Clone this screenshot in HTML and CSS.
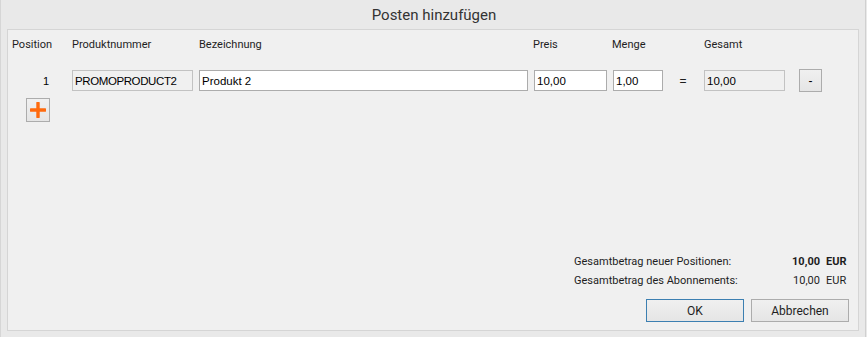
FILE: index.html
```html
<!DOCTYPE html>
<html lang="de">
  <head>
    <meta charset="UTF-8" />
    <title>Posten hinzufügen</title>
    <link rel="stylesheet" href="styles.css">
  </head>
  <body>
    <div class="window">
      <div class="title">Posten hinzufügen</div>
      <div class="panel">
        <!-- Kopfzeile -->
        <div class="grid head">
          <div class="c-pos">Position</div>
          <div>Produktnummer</div>
          <div>Bezeichnung</div>
          <div class="c-preis">Preis</div>
          <div class="c-menge">Menge</div>
          <div></div>
          <div>Gesamt</div>
          <div></div>
        </div>

        <!-- Positionen -->
        <div class="grid row">
          <div class="c-pos num">1</div>
          <div><input class="field ro w-nr" type="text" value="PROMOPRODUCT2" readonly></div>
          <div><input class="field w-bez" type="text" value="Produkt 2"></div>
          <div><input class="field w-preis" type="text" value="10,00"></div>
          <div><input class="field w-menge" type="text" value="1,00"></div>
          <div class="eq">=</div>
          <div><input class="field ro w-ges" type="text" value="10,00" readonly></div>
          <div><button class="btn-remove" type="button">-</button></div>
        </div>

        <button class="btn-add" type="button" title="Position hinzufügen">
          <svg width="16" height="16" viewBox="0 0 16 16">
            <path d="M8 1v14M1 8h14" stroke="#ff6a0d" stroke-width="3.4" stroke-linecap="round" />
          </svg>
        </button>

        <div class="spacer"></div>

        <!-- Summen -->
        <div class="totals">
          <div class="total-row">
            <span class="t-label">Gesamtbetrag neuer Positionen:</span>
            <span class="t-amount strong">10,00</span>
            <span class="t-unit strong">EUR</span>
          </div>
          <div class="total-row">
            <span class="t-label">Gesamtbetrag des Abonnements:</span>
            <span class="t-amount">10,00</span>
            <span class="t-unit">EUR</span>
          </div>
        </div>

        <div class="actions">
          <button class="btn default" type="button">OK</button>
          <button class="btn" type="button">Abbrechen</button>
        </div>
      </div>
      <div class="edge"></div>
    </div>
  </body>
</html>
```

FILE: styles.css
```css
* {
  padding: 0;
  margin: 0;
  box-sizing: border-box;
}
body {
  background: #e9e9e9;
  font-family: Roboto, "Liberation Sans", sans-serif;
  font-size: 11px;
  color: #1e1e1e;
}
.window {
  position: relative;
  width: 867px;
  height: 337px;
  border-left: 1px solid #d6d6d6;
  background: #e9e9e9;
}
.title {
  height: 29px;
  line-height: 30px;
  text-align: center;
  font-size: 15px;
  color: #333;
}
.panel {
  margin-left: 6px;
  width: 852px;
  height: 302px;
  border: 1px solid #d5d5d5;
  background: #f0f0f0;
  display: flex;
  flex-direction: column;
}
.edge {
  position: absolute;
  right: 1px;
  top: 0;
  bottom: 0;
  width: 1px;
  background: #d0d0d0;
}

/* Tabelle */
.grid {
  display: grid;
  grid-template-columns: 64px 127px 335px 79px 57px 34px 95px 23px;
  align-items: center;
}
.head {
  margin-top: 7px;
  height: 16px;
  line-height: 16px;
}
.c-pos {
  padding-left: 4px;
}
.c-preis,
.c-menge {
  margin-left: -1px;
}
.row {
  margin-top: 16px;
  height: 23px;
}
.num {
  text-align: right;
  padding-right: 23px;
  font-family: "Liberation Sans", sans-serif;
  font-size: 11px;
  color: #000;
}
.eq {
  text-align: center;
  padding-right: 8px;
  font-family: "Liberation Sans", sans-serif;
  font-size: 12px;
}
.field {
  display: block;
  height: 21px;
  border: 1px solid #acacac;
  background: #fff;
  font-family: "Liberation Sans", sans-serif;
  font-size: 11.5px;
  color: #000;
  padding: 0 2px;
  outline: none;
}
.field.ro {
  background: #f0f0f0;
  border-color: #c2c2c2;
}
.w-nr {
  width: 121px;
  letter-spacing: -0.4px;
}
.w-bez {
  width: 329px;
}
.w-preis {
  width: 73px;
}
.w-menge {
  width: 50px;
}
.w-ges {
  width: 81px;
}
.btn-remove {
  display: block;
  width: 23px;
  height: 23px;
  border: 1px solid #acacac;
  background: linear-gradient(#f0f0f0, #e5e5e5);
  font-family: "Liberation Sans", sans-serif;
  font-size: 12px;
  color: #000;
  cursor: pointer;
}
.btn-add {
  margin: 6px 0 0 18px;
  width: 24px;
  height: 24px;
  border: 1px solid #acacac;
  background: linear-gradient(#f0f0f0, #e5e5e5);
  display: flex;
  align-items: center;
  justify-content: center;
  cursor: pointer;
}
.spacer {
  flex: 1;
}

/* Summen */
.totals {
  padding-left: 566px;
}
.total-row {
  display: flex;
  height: 19px;
  line-height: 19px;
}
.t-label {
  width: 216px;
}
.t-amount {
  width: 30px;
  text-align: right;
}
.t-unit {
  margin-left: 6px;
}
.strong {
  font-weight: bold;
}

.actions {
  display: flex;
  justify-content: flex-end;
  gap: 7px;
  padding: 9px 9px 8px 0;
}
.btn {
  width: 98px;
  height: 23px;
  border: 1px solid #acacac;
  background: linear-gradient(#f0f0f0, #e5e5e5);
  font-family: Roboto, "Liberation Sans", sans-serif;
  font-size: 12px;
  color: #1e1e1e;
  cursor: pointer;
}
.btn.default {
  border-color: #3c7fb1;
}
```
